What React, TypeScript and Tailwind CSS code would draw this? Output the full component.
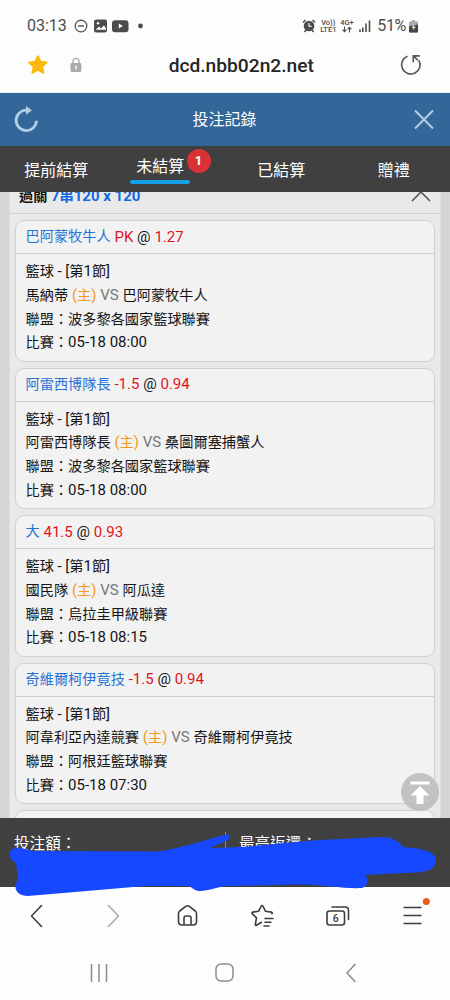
import React from 'react';

interface Bet {
  pick: string;
  line: string;
  odds: string;
  home: string;
  away: string;
  league: string;
  time: string;
}

const BETS: Bet[] = [
  {
    pick: '巴阿蒙牧牛人',
    line: 'PK',
    odds: '1.27',
    home: '馬納蒂',
    away: '巴阿蒙牧牛人',
    league: '波多黎各國家籃球聯賽',
    time: '05-18 08:00',
  },
  {
    pick: '阿雷西博隊長',
    line: '-1.5',
    odds: '0.94',
    home: '阿雷西博隊長',
    away: '桑圖爾塞捕蟹人',
    league: '波多黎各國家籃球聯賽',
    time: '05-18 08:00',
  },
  {
    pick: '大',
    line: '41.5',
    odds: '0.93',
    home: '國民隊',
    away: '阿瓜達',
    league: '烏拉圭甲級聯賽',
    time: '05-18 08:15',
  },
  {
    pick: '奇維爾柯伊竟技',
    line: '-1.5',
    odds: '0.94',
    home: '阿韋利亞內達競賽',
    away: '奇維爾柯伊竟技',
    league: '阿根廷籃球聯賽',
    time: '05-18 07:30',
  },
];

function StatusBar() {
  return (
    <div className="flex h-[52px] items-center justify-between pl-[27px] pr-[32px] text-[#4c4c4c]">
      <div className="flex items-center">
        <span className="w-[47px] text-[16px] leading-none">03:13</span>
        <svg width="70" height="16" viewBox="0 0 70 16" fill="none">
          <circle cx="7" cy="8" r="5.8" stroke="currentColor" strokeWidth="1.2" />
          <path d="M4 8h6" stroke="currentColor" strokeWidth="1.4" />
          <rect x="20" y="1.6" width="13" height="12.8" rx="2.2" fill="currentColor" />
          <path d="M22 11.5l3-3 2 2 3-3.3 2 3.3v1.3H22z" fill="#fff" />
          <circle cx="24" cy="5.3" r="1.2" fill="#fff" />
          <rect x="38" y="2.2" width="16.5" height="12" rx="3" fill="currentColor" />
          <path d="M44.8 5.6v5l4-2.5z" fill="#fff" />
          <circle cx="66.5" cy="8" r="2.4" fill="currentColor" />
        </svg>
      </div>
      <div className="flex items-center">
        <svg width="14" height="14" viewBox="0 0 14 14" className="mr-[4px]">
          <circle cx="7" cy="7" r="5.3" fill="currentColor" />
          <path d="M1 3.5L3.5 1M13 3.5L10.5 1M2.5 13L4 11M11.5 13L10 11" stroke="currentColor" strokeWidth="1.5" />
          <path d="M7 4v3.2h2.8" fill="none" stroke="#fff" strokeWidth="1.1" />
        </svg>
        <div className="flex w-[20px] flex-col text-[7.5px] font-medium leading-[7px]">
          <span className="pl-[1px]">Vo))</span>
          <span>LTE1</span>
        </div>
        <div className="flex w-[19px] flex-col items-start text-[7.5px] font-medium leading-[7px]">
          <span>4G+</span>
          <svg width="10" height="7" viewBox="0 0 10 7" className="ml-[1.5px]" fill="none" stroke="currentColor" strokeWidth="1.1">
            <path d="M2.5 .5v5M.6 3.6l1.9 2 1.9-2M7.5 6.5v-5M5.6 3.4l1.9-2 1.9 2" />
          </svg>
        </div>
        <svg width="12" height="12" viewBox="0 0 12 12" className="mr-[6px]" stroke="currentColor" strokeWidth="1.6">
          <path d="M1 9.5V12M3.8 7.5V12M7 3.5V12M10.5 .5V12" />
        </svg>
        <span className="text-[16px] leading-none tracking-[-0.3px]">51%</span>
        <svg width="9" height="14" viewBox="0 0 9 14" className="ml-[3px]">
          <path d="M3 1h3v1.5h2A1 1 0 0 1 9 3.5v9A1 1 0 0 1 8 13.5H1a1 1 0 0 1-1-1v-9a1 1 0 0 1 1-1h2z" fill="#a9a9a9" />
          <path d="M0 7.5l9-2v7a1 1 0 0 1-1 1H1a1 1 0 0 1-1-1z" fill="#444" />
          <path d="M5.5 4.5L2.5 9h2l-.7 2.8L7 7.7H4.9z" fill="#ddd" />
        </svg>
      </div>
    </div>
  );
}

function AddressBar() {
  return (
    <div className="flex h-[41px] items-start border-b border-[#e3eff9] px-[27px]">
      <svg width="22" height="22" viewBox="0 0 22 22" className="mt-[2px]">
        <path
          d="M11 2l2.7 5.7 6.3.7-4.7 4.3 1.3 6.3-5.6-3.2L5.4 19l1.3-6.3L2 8.4l6.3-.7z"
          fill="#fdb90b"
          stroke="#fdb90b"
          strokeWidth="1.8"
          strokeLinejoin="round"
        />
      </svg>
      <svg width="12" height="16" viewBox="0 0 12 16" className="ml-[21px] mt-[5px]">
        <path d="M3 7V4.3a3 3 0 0 1 6 0V7" fill="none" stroke="#aaa" strokeWidth="1.4" />
        <rect x=".5" y="6" width="11" height="9" rx="1.5" fill="#aaa" />
        <path d="M6 8.5v4" stroke="#fff" strokeWidth="1.4" />
      </svg>
      <span className="ml-[87px] mt-[2px] w-[233px] whitespace-nowrap text-[19.2px] font-medium leading-[24px] text-[#252525]">
        dcd.nbb02n2.net
      </span>
      <svg width="24" height="24" viewBox="0 0 24 24" className="mt-[1px]" fill="none" stroke="#555" strokeWidth="1.6">
        <path d="M8.5 3.2A9.3 9.3 0 1 0 20 7.2" />
        <path d="M21 2.8h-6.6v6.4M14.6 3l4.4 4" />
      </svg>
    </div>
  );
}

function PageHeader() {
  return (
    <div className="flex h-[53px] items-center justify-between bg-[#336699] pl-[14px] pr-[15px] text-[#b3cfe4]">
      <svg width="25" height="27" viewBox="0 0 25 27" fill="none">
        <path d="M13 4.2A10.2 10.2 0 1 0 22.5 14.8" stroke="currentColor" strokeWidth="2.8" />
        <path d="M12 0l6 4.3-6 4.5z" fill="currentColor" />
      </svg>
      <span className="pr-[4px] text-[16px] text-white">投注記錄</span>
      <svg width="21" height="21" viewBox="0 0 21 21" stroke="currentColor" strokeWidth="2">
        <path d="M1 1.5l18 18M19 1.5l-18 18" />
      </svg>
    </div>
  );
}

function Tabs() {
  return (
    <div className="grid h-[46px] grid-cols-4 bg-[#404040] text-[16px] leading-[24px] text-white">
      <span className="pt-[13px] text-center">提前結算</span>
      <div className="relative flex flex-col items-center pr-[17px] pt-[9px]">
        <span>未結算</span>
        <span className="mt-[1px] h-[4px] w-[60px] rounded-full bg-[#14a0e8]" />
        <span className="absolute left-[74px] top-[3px] flex h-[24px] w-[24px] items-center justify-center rounded-full bg-[#d93236] text-[13px] font-bold">
          1
        </span>
      </div>
      <span className="pt-[13px] text-center">已結算</span>
      <span className="pt-[13px] text-center">贈禮</span>
    </div>
  );
}

function BetCard({ bet }: { bet: Bet }) {
  return (
    <div className="mb-[6px] h-[141.5px] rounded-[9px] border border-[#d0d0d0] bg-[#f2f2f2] text-[14.2px] text-[#151515]">
      <div className="flex h-[33px] items-center gap-[3.8px] border-b border-[#d0d0d0] pl-[9.5px]">
        <span className="text-[#2873d2]">{bet.pick}</span>
        <span className="text-[15px] text-[#e0141c]">{bet.line}</span>
        <span className="text-[15px]">@</span>
        <span className="text-[15px] text-[#e0141c]">{bet.odds}</span>
      </div>
      <div className="pl-[9.5px] pt-[6px] leading-[23.8px]">
        <p className="h-[23.8px]">
          籃球 <span className="text-[15px]">- [</span>第<span className="text-[15px]">1</span>節<span className="text-[15px]">]</span>
        </p>
        <p className="flex h-[23.8px] gap-[3.8px]">
          <span>{bet.home}</span>
          <span className="text-[#f39a1d]">
            <span className="text-[15px]">(</span>主<span className="text-[15px]">)</span>
          </span>
          <span className="text-[15px] text-[#777]">VS</span>
          <span>{bet.away}</span>
        </p>
        <p className="h-[23.8px]">聯盟：{bet.league}</p>
        <p className="h-[23.8px]">
          比賽：<span className="text-[15px]">{bet.time}</span>
        </p>
      </div>
    </div>
  );
}

function BetList() {
  return (
    <div className="relative h-[626px] overflow-hidden bg-[#d5d5d5] px-[9px]">
      <div className="-mt-[14px] border-x border-[#dedede] bg-[#e9e9e9]">
        <div className="flex h-[36px] items-center justify-between border-b border-[#d0d0d0] pl-[9px] pr-[9px] pt-[1px]">
          <span className="whitespace-pre text-[14.2px] font-bold text-[#111]">
            過關 <span className="text-[#1768e0]"><span className="text-[15px]">7</span>串<span className="text-[15px]">120 x 120</span></span>
          </span>
          <svg width="20" height="12" viewBox="0 0 20 12" fill="none" stroke="#555" strokeWidth="1.6">
            <path d="M1 11l9-9 9 9" />
          </svg>
        </div>
        <div className="pl-[5px] pr-[5.5px] pt-[6px]">
          {BETS.map((bet) => (
            <BetCard key={bet.pick} bet={bet} />
          ))}
          {/* next card, cut off by the total bar */}
          <div className="h-[141.5px] rounded-[9px] border border-[#d0d0d0] bg-[#f2f2f2]" />
        </div>
      </div>
      <button className="absolute left-[401px] top-[581px] h-[38px] w-[38px] rounded-full bg-[#bdbdbd]/90">
        <svg width="38" height="38" viewBox="0 0 38 38" fill="#fff">
          <path d="M9.5 8.5h19v3h-19zM19 13l9.5 9.500h-6V31h-7v-8.500h-6z" />
        </svg>
      </button>
    </div>
  );
}

function TotalBar() {
  return (
    <div className="relative flex h-[69px] bg-[#404040] pt-[14px] text-[15.6px] leading-[24px] text-white">
      <span className="w-[225px] pl-[14px]">投注額：</span>
      <span className="h-[24px] border-l border-[#888] pl-[13px]">最高返還：</span>
      {/* scribble over the amounts */}
      <svg width="450" height="80" viewBox="0 818 450 80" className="absolute left-0 top-0 z-10" fill="#1548ff">
        <path d="M17 848C22 847 28 851 37 851L158 851.5C178 849 204 840 226 834.5C230 834 231 838 228 840L210 848C250 848 285 842 320 840L382 837C392 837 400 842 403 847C416 848 436 850 436 860C436 869 428 872 415 872.5L365 875C369 878 368 887 362 888C345 889 325 885 300 884.5L225 886C212 889 205 891 198 891C194 890 191 887 189 886L145 886L75 892L28 896C20 896 15 892 15.5 886C15 882 19 881 18 877L16 863C9 860 8 852 12 849z" />
      </svg>
    </div>
  );
}

function BrowserToolbar() {
  return (
    <div className="h-[58px]">
      <svg width="450" height="58" viewBox="0 887 450 58" fill="none" stroke="#3d3d3d" strokeWidth="1.6" strokeLinecap="round" strokeLinejoin="round">
        <path d="M41.5 905.5L31.5 916l10 10.5" />
        <path d="M108.5 905.5l10 10.5-10 10.5" stroke="#aaa" />
        <path d="M178.5 913.5q0-1.500 1.200-2.500l6-4.600q1.800-1.300 3.600 0l6 4.600q1.200 1 1.200 2.500v8q0 3.500-3.500 3.500h-11q-3.500 0-3.500-3.500zM184 925v-7q0-2 2-2h3q2 0 2 2v7" />
        <path d="M261.5 922.3l-5 3q-1.300.5-1.200-1l1.200-6.500-4.200-4q-1-1.300.5-1.700l5.700-.8 2.800-5.300q.7-1 1.500 0l2.800 5.300 5.700.8q1.500.4.600 1.600M265 918.500h8M265 922.300h6M264 926h5" />
        <rect x="327" y="911" width="17.5" height="14" rx="2.5" />
        <path d="M332 907h13q3.500 0 3.500 3.500v9" />
        <path d="M403.500 907.500h18M403.500 915.500h18M403.500 923.500h18" strokeLinecap="butt" />
        <circle cx="426.3" cy="901.5" r="3.5" fill="#ea5b13" stroke="none" />
        <text x="335.8" y="921.8" fontSize="10.5" fontWeight="500" textAnchor="middle" fill="#3d3d3d" stroke="none">
          6
        </text>
      </svg>
    </div>
  );
}

function SystemNav() {
  return (
    <div className="flex h-[55px] items-center justify-between pl-[90px] pr-[93px] text-[#8c8c8c]">
      <svg width="18" height="18" viewBox="0 0 18 18" stroke="currentColor" strokeWidth="1.5">
        <path d="M1.5 0v18M9 0v18M16.5 0v18" />
      </svg>
      <svg width="19" height="19" viewBox="0 0 19 19" className="mr-[4px]" fill="none" stroke="currentColor" strokeWidth="1.5">
        <rect x="1" y="1" width="17" height="17" rx="5" />
      </svg>
      <svg width="12" height="20" viewBox="0 0 12 20" fill="none" stroke="currentColor" strokeWidth="1.5">
        <path d="M10.5 1L2 10l8.5 9" />
      </svg>
    </div>
  );
}

export default function App() {
  return (
    <div className="flex h-[1000px] w-[450px] flex-col overflow-hidden bg-[#fdfdfd] font-['Roboto','Noto_Sans_CJK_TC',sans-serif]">
      <StatusBar />
      <AddressBar />
      <PageHeader />
      <Tabs />
      <BetList />
      <TotalBar />
      <BrowserToolbar />
      <SystemNav />
    </div>
  );
}
